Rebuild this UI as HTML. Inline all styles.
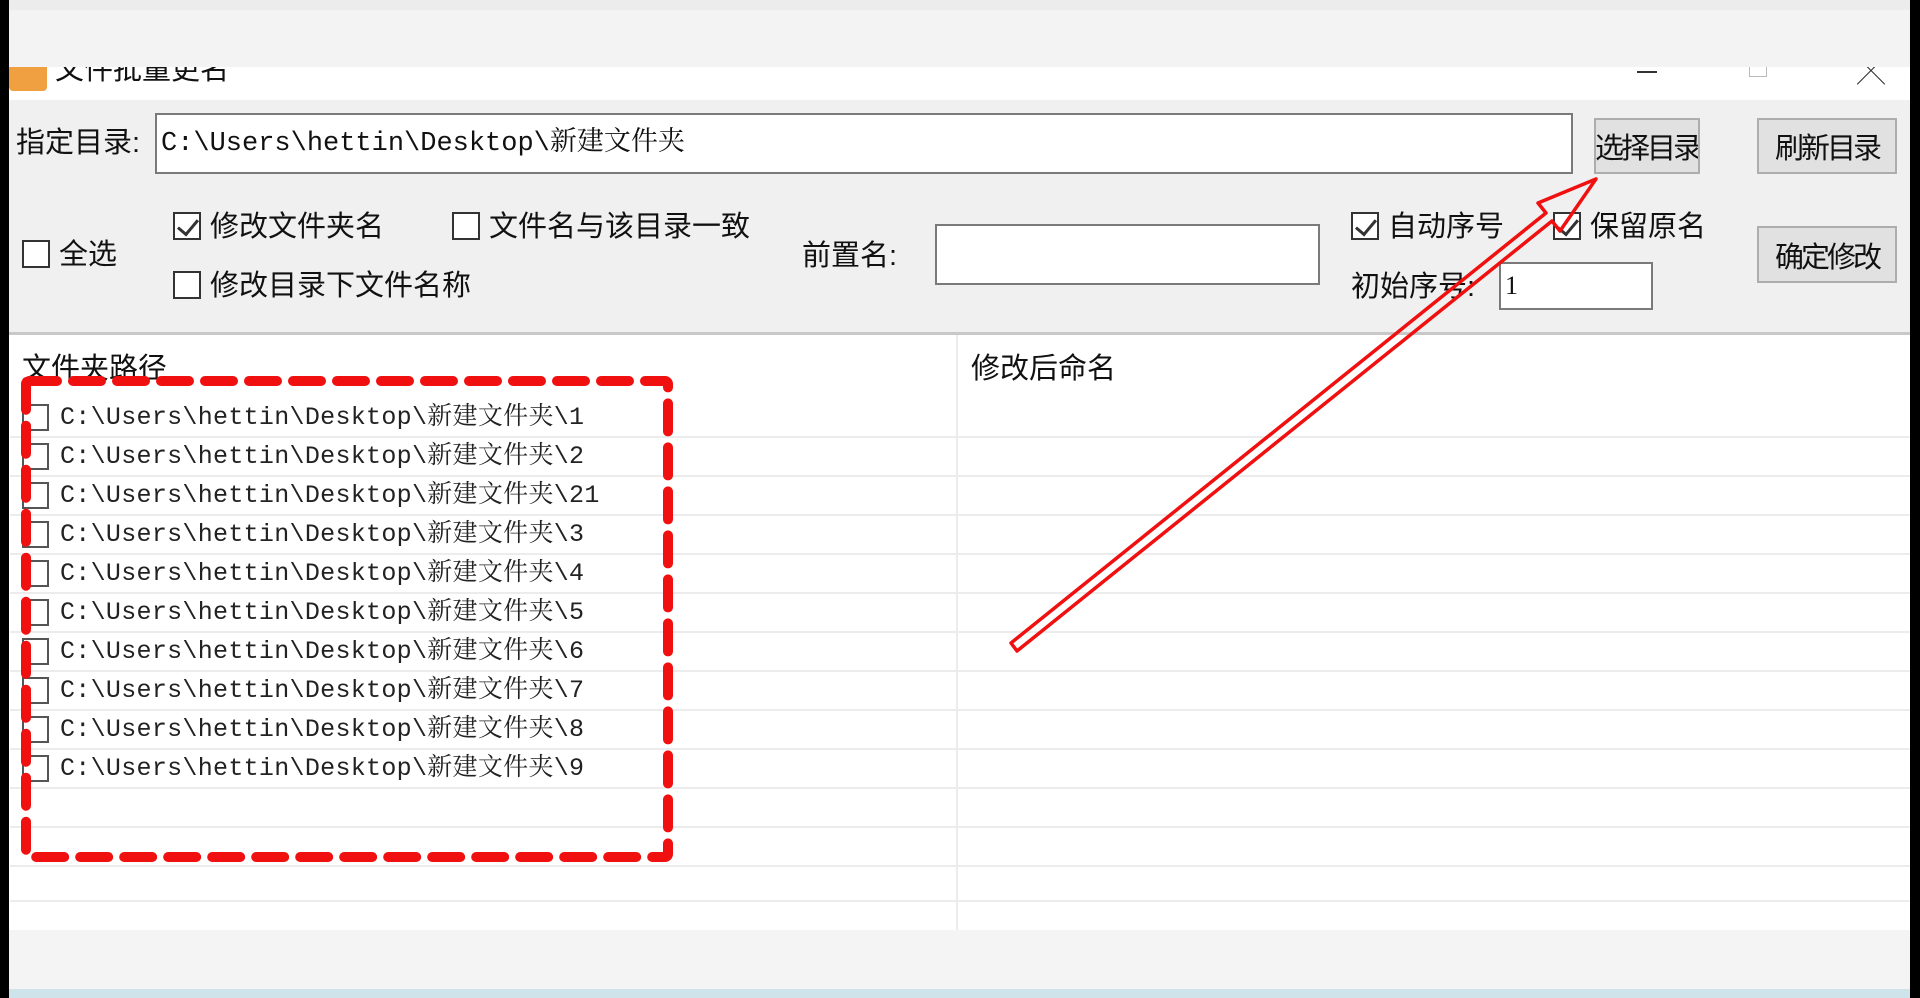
<!DOCTYPE html>
<html><head><meta charset="utf-8"><style>
*{margin:0;padding:0;box-sizing:border-box}
body{width:1920px;height:998px;overflow:hidden;background:#000;position:relative;font-family:"Liberation Sans","Noto Sans CJK SC",sans-serif;color:#111}
.a{position:absolute}
.cb{position:absolute;width:28px;height:28px;border:2px solid #333;background:#fff}
.cb.on::after{content:"";position:absolute;left:7px;top:1px;width:9px;height:17px;border:solid #333;border-width:0 3px 3px 0;transform:rotate(40deg)}
.t{position:absolute;font-size:29px;line-height:34px;white-space:nowrap}
.btn{position:absolute;background:#e1e1e1;border:2px solid #adadad;font-size:29px;display:flex;align-items:center;justify-content:center;white-space:nowrap;letter-spacing:-3px;overflow:hidden}
.tb{position:absolute;background:#fff;border:2px solid #7a7a7a}
.row{position:absolute;left:22px;height:39px;width:900px}
.row .cb{left:0;top:5px;width:27px;height:27px;border-color:#555}
.row span{position:absolute;left:38px;top:2px;font-family:"Liberation Mono","Noto Serif CJK SC",monospace;font-size:25px;line-height:34px;white-space:nowrap;color:#222;letter-spacing:0.3px}
.hl{position:absolute;left:10px;width:1900px;height:2px;background:#ececec}
</style></head><body>
<div class="a" style="left:9px;top:0;width:1901px;height:67px;background:#f3f3f3"></div>
<div class="a" style="left:9px;top:0;width:1901px;height:10px;background:#ececec"></div>
<div class="a" style="left:9px;top:67px;width:1901px;height:33px;background:#fff;overflow:hidden">
 <div class="a" style="left:0;top:-12px;width:38px;height:36px;background:#f0a040;border-radius:4px"></div>
 <div class="t" style="left:46px;top:-14px;font-size:29px">文件批量更名</div>
 <div class="a" style="left:1628px;top:4px;width:20px;height:2px;background:#333"></div>
 <div class="a" style="left:1740px;top:-4px;width:18px;height:14px;border:1px solid #bbb;border-top:none"></div>
 <div class="t" style="left:1848px;top:-12px;font-size:28px;color:#333">╳</div>
</div>
<div class="a" style="left:9px;top:100px;width:1901px;height:234px;background:#f0f0f0"></div>
<div class="a" style="left:9px;top:332px;width:1901px;height:3px;background:#c8c8c8"></div>
<div class="t" style="left:16px;top:126px">指定目录:</div>
<div class="tb" style="left:155px;top:113px;width:1418px;height:61px"><span class="t" style="left:4px;top:12px;font-family:'Liberation Mono','Noto Serif CJK SC',monospace;font-size:27px">C:\Users\hettin\Desktop\新建文件夹</span></div>
<div class="btn" style="left:1594px;top:118px;width:106px;height:56px">选择目录</div>
<div class="btn" style="left:1757px;top:118px;width:140px;height:56px">刷新目录</div>
<div class="btn" style="left:1757px;top:226px;width:140px;height:57px">确定修改</div>
<div class="cb" style="left:22px;top:240px"></div><div class="t" style="left:59px;top:238px">全选</div>
<div class="cb on" style="left:173px;top:212px"></div><div class="t" style="left:210px;top:210px">修改文件夹名</div>
<div class="cb" style="left:173px;top:271px"></div><div class="t" style="left:210px;top:269px">修改目录下文件名称</div>
<div class="cb" style="left:452px;top:212px"></div><div class="t" style="left:489px;top:210px">文件名与该目录一致</div>
<div class="t" style="left:802px;top:239px">前置名:</div>
<div class="tb" style="left:935px;top:224px;width:385px;height:61px"></div>
<div class="cb on" style="left:1351px;top:212px"></div><div class="t" style="left:1388px;top:210px">自动序号</div>
<div class="cb on" style="left:1553px;top:212px"></div><div class="t" style="left:1590px;top:210px">保留原名</div>
<div class="t" style="left:1351px;top:270px">初始序号:</div>
<div class="tb" style="left:1499px;top:262px;width:154px;height:48px"><span class="t" style="left:4px;top:5px;font-family:'Liberation Serif',serif;font-size:26px">1</span></div>
<div class="a" style="left:9px;top:335px;width:1901px;height:595px;background:#fff"></div>
<div class="a" style="left:956px;top:335px;width:2px;height:595px;background:#ececec"></div>
<div class="t" style="left:22px;top:352px">文件夹路径</div>
<div class="t" style="left:971px;top:352px">修改后命名</div>
<div class="hl" style="top:436px"></div><div class="hl" style="top:475px"></div><div class="hl" style="top:514px"></div><div class="hl" style="top:553px"></div><div class="hl" style="top:592px"></div><div class="hl" style="top:631px"></div><div class="hl" style="top:670px"></div><div class="hl" style="top:709px"></div><div class="hl" style="top:748px"></div><div class="hl" style="top:787px"></div><div class="hl" style="top:826px"></div><div class="hl" style="top:865px"></div><div class="hl" style="top:900px"></div>
<div class="row" style="top:399px"><div class="cb"></div><span>C:\Users\hettin\Desktop\新建文件夹\1</span></div>
<div class="row" style="top:438px"><div class="cb"></div><span>C:\Users\hettin\Desktop\新建文件夹\2</span></div>
<div class="row" style="top:477px"><div class="cb"></div><span>C:\Users\hettin\Desktop\新建文件夹\21</span></div>
<div class="row" style="top:516px"><div class="cb"></div><span>C:\Users\hettin\Desktop\新建文件夹\3</span></div>
<div class="row" style="top:555px"><div class="cb"></div><span>C:\Users\hettin\Desktop\新建文件夹\4</span></div>
<div class="row" style="top:594px"><div class="cb"></div><span>C:\Users\hettin\Desktop\新建文件夹\5</span></div>
<div class="row" style="top:633px"><div class="cb"></div><span>C:\Users\hettin\Desktop\新建文件夹\6</span></div>
<div class="row" style="top:672px"><div class="cb"></div><span>C:\Users\hettin\Desktop\新建文件夹\7</span></div>
<div class="row" style="top:711px"><div class="cb"></div><span>C:\Users\hettin\Desktop\新建文件夹\8</span></div>
<div class="row" style="top:750px"><div class="cb"></div><span>C:\Users\hettin\Desktop\新建文件夹\9</span></div>
<div class="a" style="left:9px;top:930px;width:1901px;height:59px;background:#f4f4f4"></div>
<div class="a" style="left:9px;top:989px;width:1901px;height:9px;background:#cfe3ea"></div>
<svg class="a" style="left:0;top:0" width="1920" height="998">
<rect x="26" y="381" width="642" height="476" fill="none" stroke="#f01010" stroke-width="10" stroke-dasharray="28 16" stroke-linecap="round" rx="3"/>
<polygon points="1011,643 1546,213 1538,203 1596,179 1560,231 1552,221 1017,651" fill="none" stroke="#f01010" stroke-width="3.5" stroke-linejoin="round"/>
</svg>
</body></html>
